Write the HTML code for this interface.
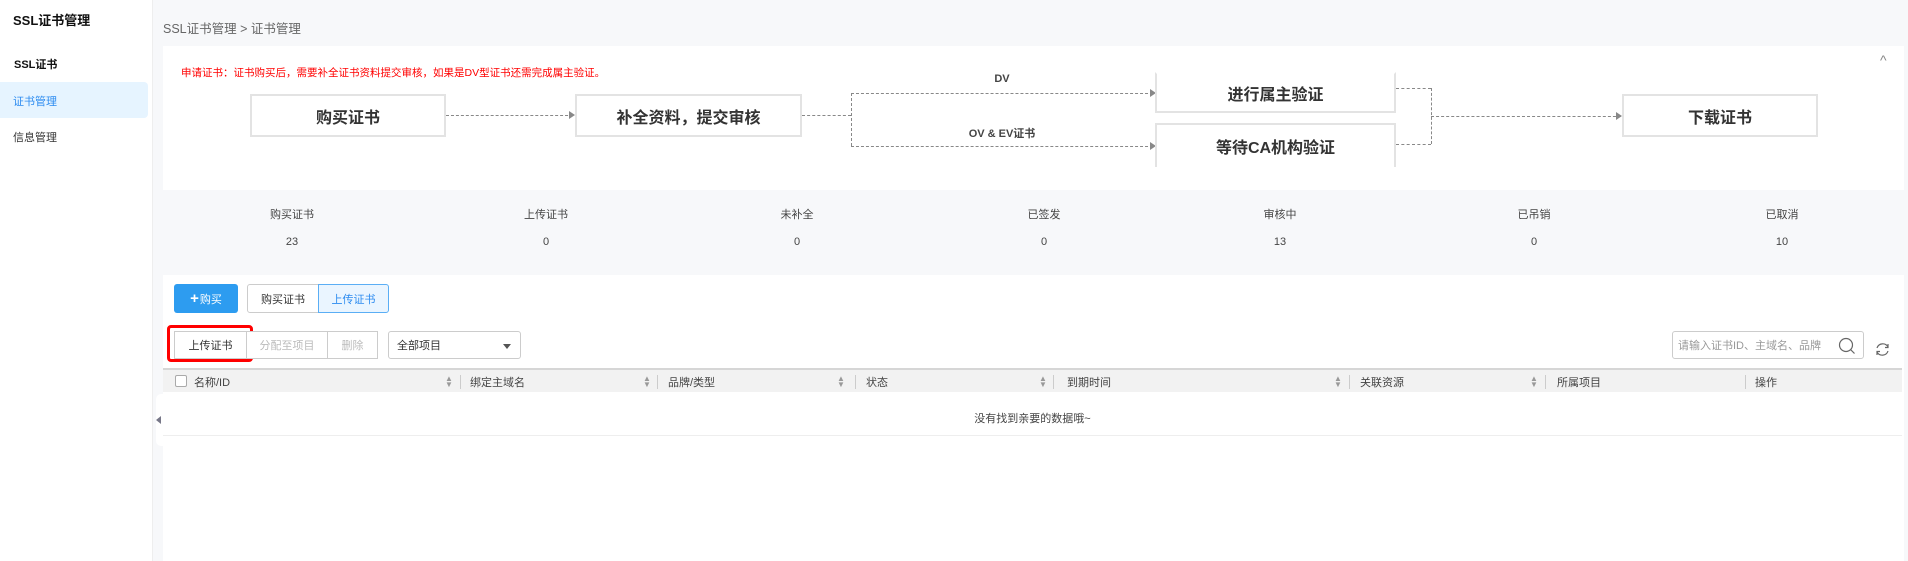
<!DOCTYPE html>
<html><head><meta charset="utf-8"><style>
*{margin:0;padding:0;box-sizing:border-box}
body{width:1908px;height:561px;overflow:hidden;background:#f7f8fa;font-family:"Liberation Sans","Noto Sans CJK SC",sans-serif;color:#333;position:relative}
.abs{position:absolute}
.side{left:0;top:0;width:153px;height:561px;background:#fff;border-right:1px solid #eee}
.box{position:absolute;border:2px solid #e3e3e3;background:#fff;font-size:16px;font-weight:bold;color:#333;display:flex;align-items:center;justify-content:center}
.dash{position:absolute;border-top:1px dashed #888}
.vd{position:absolute;border-left:1px dashed #888}
.arr{position:absolute;width:0;height:0;border-left:6px solid #888;border-top:4px solid transparent;border-bottom:4px solid transparent}
.stat{position:absolute;top:206px;width:248px;text-align:center;font-size:11px;color:#444}
.stat b{display:block;font-weight:normal;margin-top:14px}
.btn{position:absolute;height:28px;border:1px solid #ccc;background:#fff;font-size:11px;display:flex;align-items:center;justify-content:center}
.th{position:absolute;top:382px;font-size:11px;color:#444}
.sep{position:absolute;top:375px;width:1px;height:14px;background:#ccc}
.sort{position:absolute;top:376px;font-size:8px;color:#999;line-height:6px}
</style></head><body>
<div class="abs side">
 <div class="abs" style="left:13px;top:10px;font-size:13px;font-weight:bold;color:#111">SSL证书管理</div>
 <div class="abs" style="left:14px;top:56px;font-size:11px;font-weight:bold;color:#111">SSL证书</div>
 <div class="abs" style="left:0;top:82px;width:148px;height:36px;background:#e6f4ff;border-radius:0 4px 4px 0"></div>
 <div class="abs" style="left:13px;top:93px;font-size:11px;color:#2d8cf0">证书管理</div>
 <div class="abs" style="left:13px;top:129px;font-size:11px;color:#333">信息管理</div>
</div>
<div class="abs" style="left:156px;top:394px;width:8px;height:52px;background:#fff;border-radius:5px 0 0 5px"></div>
<div class="abs" style="left:156px;top:416px;width:0;height:0;border-right:5px solid #778;border-top:4px solid transparent;border-bottom:4px solid transparent"></div>
<div class="abs" style="left:163px;top:18px;font-size:12.5px;color:#666">SSL证书管理 &gt; 证书管理</div>

<div class="abs" style="left:163px;top:46px;width:1741px;height:144px;background:#fff"></div>
<div class="abs" style="left:181px;top:65px;font-size:10.5px;color:#f00">申请证书：证书购买后，需要补全证书资料提交审核，如果是DV型证书还需完成属主验证。</div>
<div class="abs" style="left:1880px;top:52px;font-size:14px;color:#888">^</div>
<div class="box" style="left:250px;top:94px;width:196px;height:43px">购买证书</div>
<div class="dash" style="left:446px;top:115px;width:127px"></div><div class="arr" style="left:569px;top:111px"></div>
<div class="box" style="left:575px;top:94px;width:227px;height:43px">补全资料，提交审核</div>
<div class="dash" style="left:802px;top:115px;width:49px"></div>
<div class="vd" style="left:851px;top:93px;height:53px"></div>
<div class="dash" style="left:851px;top:93px;width:302px"></div><div class="arr" style="left:1150px;top:89px"></div>
<div class="dash" style="left:851px;top:146px;width:302px"></div><div class="arr" style="left:1150px;top:142px"></div>
<div class="abs" style="left:952px;top:73px;width:100px;text-align:center;font-size:11px;font-weight:bold;color:#444">DV</div>
<div class="abs" style="left:942px;top:125px;width:120px;text-align:center;font-size:11px;font-weight:bold;color:#444">OV &amp; EV证书</div>
<div class="box" style="left:1155px;top:72px;width:241px;height:41px;border-top-color:#fff">进行属主验证</div>
<div class="box" style="left:1155px;top:123px;width:241px;height:44px;border-bottom:none">等待CA机构验证</div>
<div class="dash" style="left:1396px;top:88px;width:35px"></div>
<div class="dash" style="left:1396px;top:144px;width:35px"></div>
<div class="vd" style="left:1431px;top:88px;height:56px"></div>
<div class="dash" style="left:1431px;top:116px;width:190px"></div><div class="arr" style="left:1616px;top:112px"></div>
<div class="box" style="left:1622px;top:94px;width:196px;height:43px">下载证书</div>

<div class="stat" style="left:168px">购买证书<b>23</b></div>
<div class="stat" style="left:422px">上传证书<b>0</b></div>
<div class="stat" style="left:673px">未补全<b>0</b></div>
<div class="stat" style="left:920px">已签发<b>0</b></div>
<div class="stat" style="left:1156px">审核中<b>13</b></div>
<div class="stat" style="left:1410px">已吊销<b>0</b></div>
<div class="stat" style="left:1658px">已取消<b>10</b></div>

<div class="abs" style="left:163px;top:275px;width:1741px;height:286px;background:#fff"></div>
<div class="abs" style="left:174px;top:284px;width:64px;height:29px;background:#2d9cf0;border-radius:3px;color:#fff;font-size:11px;display:flex;align-items:center;justify-content:center"><b style="font-size:15px;margin-right:1px">+</b>购买</div>
<div class="btn" style="left:247px;top:284px;width:72px;height:29px;border-radius:3px 0 0 3px">购买证书</div>
<div class="btn" style="left:318px;top:284px;width:71px;height:29px;border-color:#5aaef5;background:#eaf5ff;color:#2d8cf0;border-radius:0 3px 3px 0">上传证书</div>
<div class="abs" style="left:167px;top:325px;width:86px;height:37px;border:3px solid #f00;border-radius:4px"></div>
<div class="btn" style="left:174px;top:331px;width:73px">上传证书</div>
<div class="btn" style="left:246px;top:331px;width:82px;color:#bbb">分配至项目</div>
<div class="btn" style="left:327px;top:331px;width:51px;color:#bbb">删除</div>
<div class="btn" style="left:388px;top:331px;width:133px;justify-content:flex-start;padding-left:8px;border-radius:3px">全部项目<span style="position:absolute;right:9px;top:12px;border-top:5px solid #555;border-left:4px solid transparent;border-right:4px solid transparent"></span></div>
<div class="btn" style="left:1672px;top:331px;width:192px;justify-content:flex-start;padding-left:5px;color:#999;border-radius:3px">请输入证书ID、主域名、品牌
<svg style="position:absolute;right:7px;top:5px" width="18" height="18" viewBox="0 0 18 18"><circle cx="8" cy="8" r="6.5" fill="none" stroke="#666" stroke-width="1.2"/><path d="M12.5 12.5L16.5 16.5" stroke="#666" stroke-width="1.2"/></svg></div>
<svg class="abs" style="left:1874px;top:341px" width="17" height="17" viewBox="0 0 17 17"><path d="M3 7A6 6 0 0 1 14 6M14 10A6 6 0 0 1 3 11" fill="none" stroke="#666" stroke-width="1.2"/><path d="M14 3V6.5H11M3 14V10.5H6" fill="none" stroke="#666" stroke-width="1.2"/></svg>

<div class="abs" style="left:163px;top:368px;width:1739px;height:24px;background:#f2f2f2;border-top:2px solid #d6d6d6"></div>
<div class="abs" style="left:175px;top:375px;width:12px;height:12px;border:1px solid #aaa;background:#fff;border-radius:2px"></div>
<div class="th" style="left:194px;top:374px">名称/ID</div>
<div class="sort" style="left:445px">▲<br>▼</div><div class="sep" style="left:460px"></div>
<div class="th" style="left:470px;top:374px">绑定主域名</div>
<div class="sort" style="left:643px">▲<br>▼</div><div class="sep" style="left:657px"></div>
<div class="th" style="left:668px;top:374px">品牌/类型</div>
<div class="sort" style="left:837px">▲<br>▼</div><div class="sep" style="left:855px"></div>
<div class="th" style="left:866px;top:374px">状态</div>
<div class="sort" style="left:1039px">▲<br>▼</div><div class="sep" style="left:1053px"></div>
<div class="th" style="left:1067px;top:374px">到期时间</div>
<div class="sort" style="left:1334px">▲<br>▼</div><div class="sep" style="left:1349px"></div>
<div class="th" style="left:1360px;top:374px">关联资源</div>
<div class="sort" style="left:1530px">▲<br>▼</div><div class="sep" style="left:1545px"></div>
<div class="th" style="left:1557px;top:374px">所属项目</div>
<div class="sep" style="left:1745px"></div>
<div class="th" style="left:1755px;top:374px">操作</div>
<div class="abs" style="left:163px;top:410px;width:1739px;text-align:center;font-size:11px;color:#444">没有找到亲要的数据哦~</div>
<div class="abs" style="left:163px;top:435px;width:1739px;height:1px;background:#eee"></div>
</body></html>
